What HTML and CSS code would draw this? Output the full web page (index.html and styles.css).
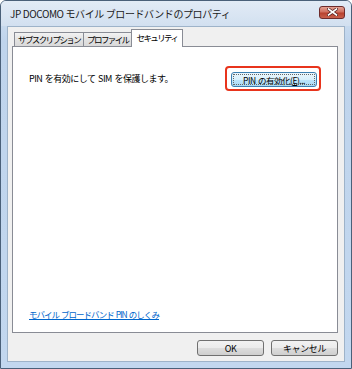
FILE: index.html
```html
<!DOCTYPE html>
<html lang="ja">
<head>
  <meta charset="UTF-8" />
  <title>JP DOCOMO モバイル ブロードバンドのプロパティ</title>
  <link rel="stylesheet" href="styles.css">
</head>
<body>
  <div class="window">
    <div class="title-bar">
      <span class="title">JP DOCOMO モバイル ブロードバンドのプロパティ</span>
      <button class="close-button" aria-label="閉じる">
        <svg width="11" height="8" viewBox="0 0 11 8">
          <path d="M1.5 1 L9.5 7 M9.5 1 L1.5 7" stroke="#4a1a1a" stroke-width="3" stroke-linecap="square" />
          <path d="M1.5 1 L9.5 7 M9.5 1 L1.5 7" stroke="#fff" stroke-width="1.6" stroke-linecap="square" />
        </svg>
      </button>
    </div>

    <div class="client">
      <div class="tabs">
        <div class="tab">サブスクリプション</div>
        <div class="tab">プロファイル</div>
        <div class="tab selected">セキュリティ</div>
      </div>

      <div class="panel">
        <div class="pin-row">
          <span class="pin-text">PIN を有効にして SIM を保護します。</span>
          <div class="highlight">
            <button class="btn pin-button">PIN の有効化(<u>E</u>)...</button>
          </div>
        </div>
        <a href="#" class="help-link">モバイル ブロードバンド PIN のしくみ</a>
      </div>

      <div class="footer">
        <button class="btn">OK</button>
        <button class="btn">キャンセル</button>
      </div>
    </div>
  </div>
</body>
</html>
```

FILE: styles.css
```css
body {
  margin: 0;
  font-family: "Noto Sans CJK JP", "Noto Sans", sans-serif;
  font-size: 9px;
  letter-spacing: -0.4px;
  color: #000;
  background: #fff;
}

.window {
  width: 352px;
  height: 369px;
  box-sizing: border-box;
  border: 1px solid #4a6079;
  border-radius: 6px 6px 0 0;
  background: linear-gradient(to bottom, #d3e2f2, #bfd4ec 40px, #c2d7ef);
  display: flex;
  flex-direction: column;
}

.title-bar {
  height: 25px;
  display: flex;
  align-items: center;
  justify-content: space-between;
  padding: 0 6px 0 9px;
  background: linear-gradient(to bottom, #e2ebf6, #d2e0f0);
  border-radius: 5px 5px 0 0;
}

.title {
  font-size: 10px;
  letter-spacing: -0.4px;
  color: #1a1a1a;
}

.close-button {
  width: 26px;
  height: 13px;
  margin-top: -3px;
  padding: 0;
  border: 1px solid #6e2c2c;
  border-radius: 3px;
  background: linear-gradient(to bottom, #e5a293, #cf6f5f 45%, #b8412e 55%, #c8604c);
  display: flex;
  align-items: center;
  justify-content: center;
}

.client {
  flex: 1;
  margin: 0 6px 6px;
  padding: 2px 6px 5px 4px;
  background: #f0f0f0;
  border: 1px solid #9eb3c9;
  display: flex;
  flex-direction: column;
}

.tabs {
  display: flex;
  align-items: flex-end;
  height: 17px;
  padding-left: 2px;
}

.tab {
  height: 13px;
  line-height: 13px;
  padding: 0 3px;
  border: 1px solid #898c95;
  border-bottom: none;
  margin-right: -1px;
  font-size: 8.5px;
  letter-spacing: -1.6px;
  background: linear-gradient(to bottom, #f2f2f2, #e3e3e3 50%, #d9d9d9);
  color: #000;
}

.tab.selected {
  height: 17px;
  line-height: 14px;
  padding: 0 5px;
  margin-left: -1px;
  margin-bottom: -1px;
  background: #fff;
  position: relative;
  z-index: 1;
}

.panel {
  flex: 1;
  background: #fff;
  border: 1px solid #898c95;
  padding: 19px 16px 12px 16px;
  display: flex;
  flex-direction: column;
}

.pin-row {
  display: flex;
  align-items: center;
  justify-content: space-between;
}

.pin-text {
  letter-spacing: -0.5px;
  word-spacing: 1px;
}

.highlight {
  border: 2px solid #e8341c;
  border-radius: 4px;
  padding: 4px 2px 2px 4px;
}

.btn {
  font-family: inherit;
  font-size: 9px;
  letter-spacing: -0.4px;
  color: #000;
  height: 15px;
  padding: 0;
  border: 1px solid #707070;
  border-radius: 3px;
  background: linear-gradient(to bottom, #f2f2f2, #ebebeb 50%, #dddddd 50%, #cfcfcf);
}

.pin-button {
  width: 86px;
  font-size: 8.5px;
  letter-spacing: -0.5px;
  word-spacing: 1px;
  border-color: #3c7fb1;
  background: linear-gradient(to bottom, #eaf6fd, #d9f0fc 50%, #bee6fd 50%, #a7d9f5);
  outline: 1px dotted #666;
  outline-offset: -3px;
}

.help-link {
  margin-top: auto;
  font-size: 8.5px;
  color: #0066cc;
  letter-spacing: -1px;
  word-spacing: 1px;
}

.footer {
  display: flex;
  justify-content: flex-end;
  gap: 7px;
  padding-top: 7px;
}

.footer .btn {
  width: 67px;
  height: 16px;
}
```
